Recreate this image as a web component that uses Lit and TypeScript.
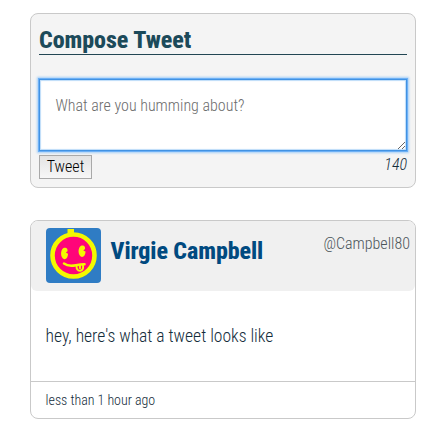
import { LitElement, html, css } from "lit";
import { customElement, property } from "lit/decorators.js";

@customElement("tweet-composer")
class TweetComposer extends LitElement {
  @property({ type: Number }) limit = 140;

  static styles = css`
    :host { display: block; box-sizing: border-box; height: 175px; padding: 8px;
      border: 1px solid #c9c9c9; border-radius: 8px; background: #f4f4f4; }
    .title { box-sizing: border-box; height: 33px; margin: 0 0 24px; border-bottom: 1px solid #224653;
      color: #1c4a5a; font-size: 24px; font-weight: 800; letter-spacing: -0.03px; line-height: 36px; }
    .input { display: block; box-sizing: border-box; width: 100%; height: 72px; margin: 0;
      padding: 16px 16px 14px 15.5px; border: 1px solid #4192e3; outline: none; resize: both; background: #fff;
      font: inherit; font-size: 16px; font-weight: 300; line-height: 20px;
      box-shadow: 0 0 0 1px #6db0f5, 0 0 2px 2px #a5cff8, inset 0 0 1px 1px #bddcf9; }
    .input::placeholder { color: #6c6c6c; opacity: 1; }
    .row { display: flex; justify-content: space-between; align-items: flex-start; padding-top: 4px; }
    .send { box-sizing: border-box; width: 53px; height: 24px; padding: 0; border: 1px solid #a9a9a9;
      background: linear-gradient(#e3e3e3, #f7f7f7); color: #000; font: inherit; font-size: 16px; line-height: 22px; }
    .count { font-size: 16px; font-style: italic; line-height: 20px; }
  `;

  render() {
    return html`
      <h2 class="title">Compose Tweet</h2>
      <textarea class="input" placeholder="What are you humming about?"></textarea>
      <div class="row"><button class="send">Tweet</button><span class="count">${this.limit}</span></div>
    `;
  }
}

@customElement("tweet-card")
class TweetCard extends LitElement {
  @property() name = "";
  @property() handle = "";
  @property() text = "";
  @property() age = "";

  static styles = css`
    :host { display: block; box-sizing: border-box; height: 199px; border: 1px solid #c9c9c9;
      border-radius: 8px; background: #fff; overflow: hidden; }
    .head { display: flex; box-sizing: border-box; height: 70px; padding: 7px 5px 0 15px;
      border-radius: 6px; background: #f0f0f0; }
    .avatar { display: block; flex: none; width: 55px; height: 55px; border-radius: 4px; }
    .name { flex: 1; margin: 0 0 0 9.5px; color: #004a80; font-size: 24px; font-weight: 800; letter-spacing: -0.07px; line-height: 47px; }
    .handle { color: #4c555a; font-size: 16px; line-height: 32px; }
    .text { box-sizing: border-box; height: 91px; margin: 0; padding: 0 14.6px; border-bottom: 1px solid #c9c9c9;
      font-size: 17.6px; letter-spacing: -0.03px; line-height: 90px; }
    .foot { padding: 0 14.6px; font-size: 14px; letter-spacing: -0.04px; line-height: 37px; }
  `;

  render() {
    return html`
      <header class="head">
        <svg class="avatar" viewBox="0 0 55 55">
          <rect width="55" height="55" fill="#2f7cc4" />
          <path d="M21.5 1h6.5v6h-6.5z" fill="#f4f800" />
          <circle cx="27.5" cy="27.5" r="21" fill="#ff0579" stroke="#f4f800" stroke-width="4.6" />
          <path d="M17.5 20c2.5-1 4.500 0 4 3.200l-1.700 1.400 2.200 1.200c0 3.300-1.700 5.700-3.700 5.400-4-1-4.300-9.200-.8-11.200zM35 17.800c2.500-1 4.500 0 4 3.200l-1.700 1.400 2.200 1.200c0 3.300-1.700 5.700-3.700 5.400-4-1-4.300-9.200-.8-11.200z" fill="#f4f800" />
          <path d="M18 35.600c3 2.200 8 2.400 12 1.600s5-.9 8.500-.9" fill="none" stroke="#f4f800" stroke-width="2.500" stroke-linecap="round" />
          <path d="M30.500 38c-.2 3.500 2 5.200 4 4.800 2.500-.5 3.200-3.200 2.200-6M34 37.500v2.700" fill="none" stroke="#f4f800" stroke-width="1.900" stroke-linecap="round" />
        </svg>
        <h2 class="name">${this.name}</h2>
        <span class="handle">${this.handle}</span>
      </header>
      <p class="text">${this.text}</p>
      <footer class="foot">${this.age}</footer>
    `;
  }
}

@customElement("app-root")
class AppRoot extends LitElement {
  static styles = css`
    :host { display: flex; flex-direction: column; gap: 32px; box-sizing: border-box; height: 444px;
      padding: 13px 31px 0 30px; background: #fff; color: #142d3b;
      font-family: "Roboto Condensed", Roboto, sans-serif; font-stretch: 75%; font-weight: 330; }
  `;

  render() {
    return html`
      <tweet-composer></tweet-composer>
      <tweet-card name="Virgie Campbell" handle="@Campbell80" text="hey, here's what a tweet looks like" age="less than 1 hour ago"></tweet-card>
    `;
  }
}
